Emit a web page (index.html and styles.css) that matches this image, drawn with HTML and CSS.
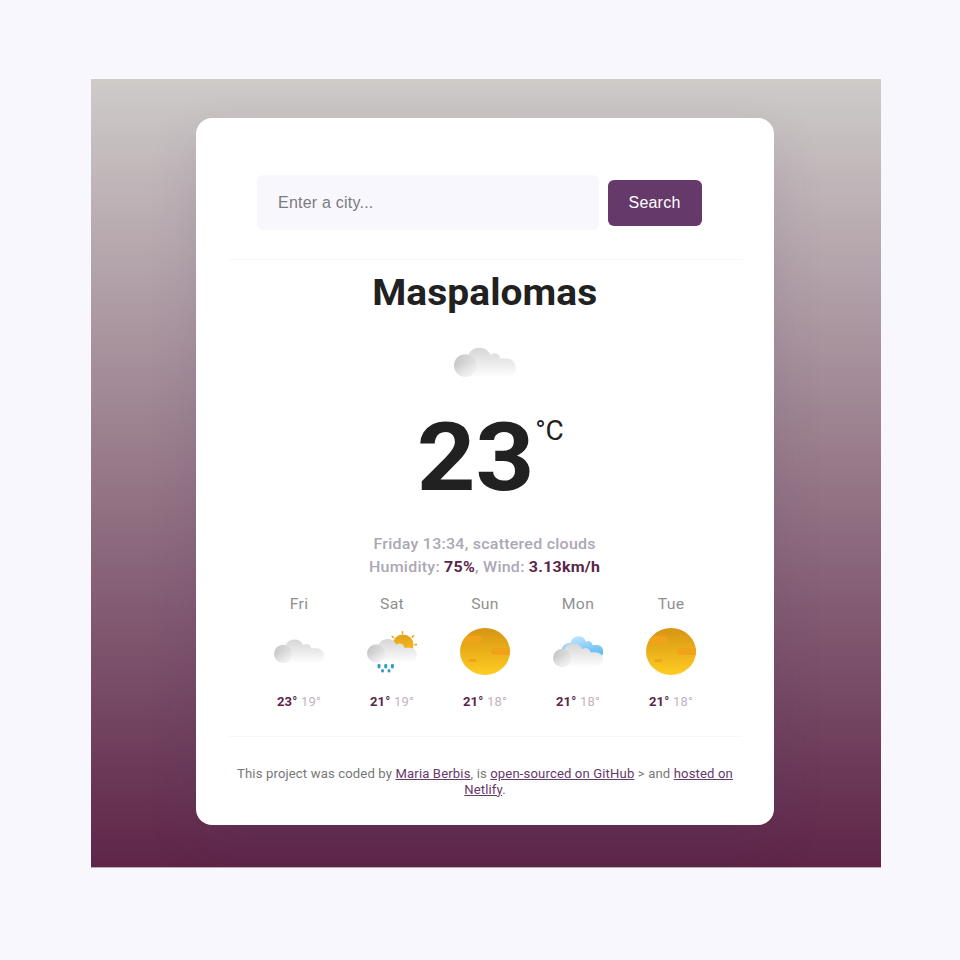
FILE: index.html
```
<!DOCTYPE html>
<html lang="en">
<head>
<meta charset="utf-8">
<title>Weather</title>
<link rel="stylesheet" href="styles.css">
</head>
<body>
<svg class="defs" width="0" height="0" aria-hidden="true">
  <defs>
    <linearGradient id="body" x1="0" y1="0" x2="0" y2="1"><stop offset="0" stop-color="#d6d6d6"/><stop offset="1" stop-color="#fefefe"/></linearGradient>
    <linearGradient id="puff" x1="0" y1="0.3" x2="1" y2="0.7"><stop offset="0" stop-color="#c8c8c8"/><stop offset="1" stop-color="#e4e4e4"/></linearGradient>
    <linearGradient id="puffFade" x1="0.3" y1="0" x2="0.6" y2="1"><stop offset="0.4" stop-color="#fff" stop-opacity="0"/><stop offset="1" stop-color="#fff" stop-opacity="0.6"/></linearGradient>
    <linearGradient id="sun" x1="0" y1="0" x2="0" y2="1"><stop offset="0" stop-color="#d79412"/><stop offset="1" stop-color="#fecd23"/></linearGradient>
    <linearGradient id="smallSun" x1="0" y1="0" x2="0" y2="1"><stop offset="0" stop-color="#e2a11a"/><stop offset="1" stop-color="#fbc222"/></linearGradient>
    <linearGradient id="blue" x1="0" y1="0" x2="0.4" y2="1"><stop offset="0" stop-color="#cdeaff"/><stop offset="1" stop-color="#64bdf3"/></linearGradient>
    <clipPath id="disc"><ellipse cx="25" cy="23.5" rx="25" ry="23.5"/></clipPath>
    <symbol id="cloud" viewBox="0 0 50 24" overflow="visible">
      <path d="M9 24V6.500H11.300A10 10 0 0 1 29.500 6.300A4.600 4.600 0 0 1 37.300 9.200H42.500A7.400 7.400 0 0 1 42.500 24Z" fill="url(#body)"/>
      <circle cx="9.1" cy="14.9" r="9.1" fill="url(#puff)"/>
      <circle cx="9.1" cy="14.9" r="9.1" fill="url(#puffFade)"/>
    </symbol>
    <symbol id="clear" viewBox="0 0 50 47">
      <ellipse cx="25" cy="23.5" rx="25" ry="23.5" fill="url(#sun)"/>
      <g clip-path="url(#disc)" fill="#f0a31a">
        <rect x="1" y="8" width="20.500" height="7.500" rx="3.700"/>
        <rect x="31" y="20" width="24" height="7" rx="3.500"/>
        <rect x="8.500" y="31" width="8" height="3" rx="1.500"/>
      </g>
    </symbol>
  </defs>
</svg>
<div class="backdrop">
  <main class="card">
    <form class="search">
      <input class="search-input" type="text" placeholder="Enter a city...">
      <button class="search-button" type="button">Search</button>
    </form>
    <section class="current">
      <h1 class="city">Maspalomas</h1>
      <svg class="current-icon" viewBox="0 0 50 24"><use href="#cloud" width="50" height="24"/></svg>
      <div class="temperature"><span class="value">23</span><span class="unit">°C</span></div>
      <p class="details">Friday 13:34, scattered clouds<br>Humidity: <strong>75%</strong>, Wind: <strong>3.13km/h</strong></p>
    </section>
    <section class="forecast">
      <div class="day"><div class="name">Fri</div>
        <svg class="icon" viewBox="0 0 50 50"><use href="#cloud" y="13" width="50" height="24"/></svg>
        <div class="range"><strong>23°</strong> <span>19°</span></div></div>
      <div class="day"><div class="name">Sat</div>
        <svg class="icon" viewBox="0 0 50 50">
          <circle cx="36" cy="19" r="10.500" fill="url(#smallSun)"/>
          <path d="M35.500 5.800V7.500M25.200 10.300l1.400 1.400M46.600 9.700l-1.400 1.400M48 18.600h1.800" stroke="#efa91c" stroke-width="1.600" stroke-linecap="round"/>
          <use href="#cloud" y="12.500" width="50" height="24"/>
          <g fill="#3799ce"><rect x="10.500" y="37.800" width="3" height="4.800" rx="1.500"/><rect x="17.200" y="37.800" width="3" height="4.800" rx="1.500"/><rect x="23.900" y="37.800" width="3" height="4.800" rx="1.500"/><rect x="14" y="43" width="3" height="3.400" rx="1.500"/><rect x="20.500" y="43" width="3" height="3.400" rx="1.500"/></g>
        </svg>
        <div class="range"><strong>21°</strong> <span>19°</span></div></div>
      <div class="day"><div class="name">Sun</div>
        <svg class="icon" viewBox="0 0 50 50"><use href="#clear" y="2" width="50" height="47"/></svg>
        <div class="range"><strong>21°</strong> <span>18°</span></div></div>
      <div class="day"><div class="name">Mon</div>
        <svg class="icon" viewBox="0 0 50 50">
          <path d="M8 25Q9 17 17.800 16.800A7.800 7.800 0 0 1 33 16A4 4 0 0 1 39.500 19H43.500A6.600 6.600 0 0 1 47.500 31H8Z" fill="url(#blue)"/>
          <use href="#cloud" y="17" width="50" height="24"/>
        </svg>
        <div class="range"><strong>21°</strong> <span>18°</span></div></div>
      <div class="day"><div class="name">Tue</div>
        <svg class="icon" viewBox="0 0 50 50"><use href="#clear" y="2" width="50" height="47"/></svg>
        <div class="range"><strong>21°</strong> <span>18°</span></div></div>
    </section>
    <footer class="credits">This project was coded by <a href="#">Maria Berbis</a>, is <a href="#">open-sourced on GitHub</a> &gt; and <a href="#">hosted on Netlify</a>.</footer>
  </main>
</div>
</body>
</html>
```
FILE: styles.css
```
* { box-sizing: border-box; }
body {
  margin: 0;
  padding: 79px 79px 92px 91px;
  background: #f8f7fe;
  color: #212121;
  font-family: Roboto, "Liberation Sans", sans-serif;
}
.defs { position: absolute; }
svg { display: block; }
.backdrop {
  height: 789px;
  padding: 39px 107px 43px 105px;
  overflow: hidden;
  background: linear-gradient(#cecbc9, #5e2548);
  border-bottom: 1px solid #b9abb4;
}
.card {
  height: 707px;
  padding: 57px 32px 0;
  border-radius: 16px;
  background: #fff;
  box-shadow: 0 20px 50px rgba(65, 50, 100, 0.13);
}
.search {
  display: flex;
  align-items: center;
  gap: 9px;
  height: 85px;
  padding: 0 30px 30px 29px;
  border-bottom: 1px solid #f7f7f7;
}
.search-input {
  width: 342px;
  height: 55px;
  padding: 1px 21px 0;
  border: 0;
  border-radius: 6px;
  background: #f8f7fe;
  font: 16px "Liberation Sans", sans-serif;
  letter-spacing: 0.22px;
}
.search-input::placeholder { color: #7c7c7c; }
.search-button {
  width: 94px;
  height: 46px;
  margin: 1px 0 0 -0.5px;
  padding: 0;
  border: 0;
  border-radius: 6px;
  background: #653969;
  color: #fff;
  font: 16px "Liberation Sans", sans-serif;
  letter-spacing: 0.22px;
}
.current {
  display: flex;
  flex-direction: column;
  align-items: center;
}
.city {
  margin: 9px 0 0;
  font-size: 36.5px;
  line-height: 48px;
  letter-spacing: 0.1px;
  transform: scaleX(1.065);
}
.current-icon { width: 62px; height: 30px; margin-top: 30px; }
.temperature {
  display: flex;
  align-items: flex-start;
  margin: 23px 0 0 12px;
  height: 114px;
}
.value {
  margin-left: 3px;
  font-size: 95px;
  line-height: 115px;
  font-weight: 700;
  transform: scaleX(1.08);
}
.unit { margin: 14px 0 0 5px; font-size: 28px; line-height: 34px; }
.details {
  margin: 19px 0 0;
  color: #aca7b5;
  font-size: 15px;
  line-height: 23px;
  font-weight: 500;
  letter-spacing: 0.24px;
  text-align: center;
  transform: scaleX(1.065);
}
.details strong { color: #5b2549; font-weight: 700; }
.forecast {
  display: grid;
  grid-template-columns: repeat(5, 93px);
  justify-content: center;
  height: 158px;
  padding-top: 13px;
  border-bottom: 1px solid #f7f7f7;
}
.day { margin-left: -1px; text-align: center; }
.name {
  color: #8f8f8f;
  font-size: 15px;
  line-height: 24px;
  letter-spacing: 0.3px;
  transform: scaleX(1.05);
}
.icon { width: 50px; height: 50px; margin: 10px auto 16px; }
.range {
  font-size: 12.4px;
  line-height: 20px;
  letter-spacing: 0.2px;
  transform: scaleX(1.05);
}
.range strong { color: #5b2549; }
.range span { color: #c5b1c0; }
.credits {
  width: 482px;
  margin-left: 16px;
  padding-top: 30px;
  color: #777;
  font-size: 12.3px;
  line-height: 15.5px;
  letter-spacing: 0.13px;
  text-align: center;
  transform: scaleX(1.065);
}
.credits a { color: #653969; }
```
